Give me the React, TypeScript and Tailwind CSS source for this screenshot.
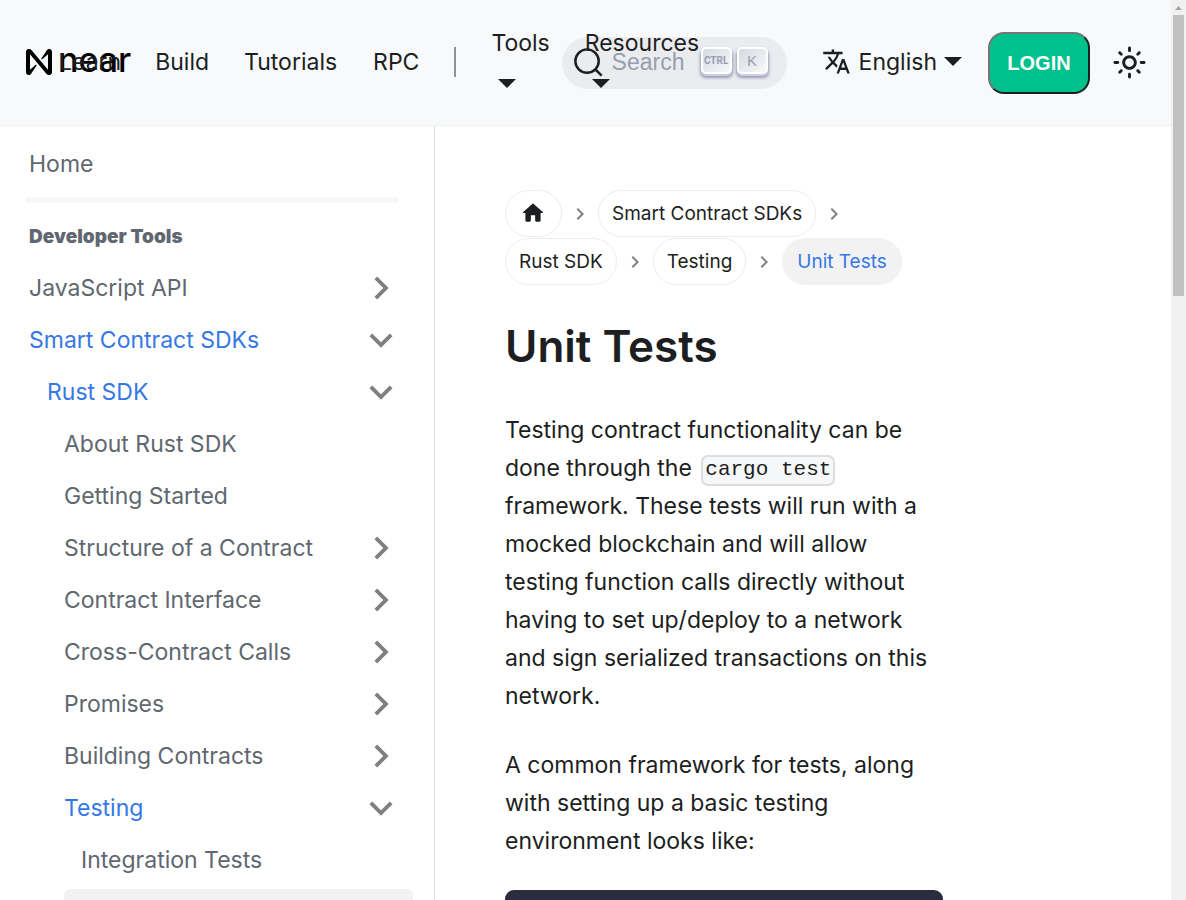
import React from "react";

type SidebarEntry = {
  label: string;
  depth: 0 | 1 | 2 | 3;
  state?: "open" | "closed";
};

const entries: SidebarEntry[] = [
  { label: "JavaScript API", depth: 0, state: "closed" },
  { label: "Smart Contract SDKs", depth: 0, state: "open" },
  { label: "Rust SDK", depth: 1, state: "open" },
  { label: "About Rust SDK", depth: 2 },
  { label: "Getting Started", depth: 2 },
  { label: "Structure of a Contract", depth: 2, state: "closed" },
  { label: "Contract Interface", depth: 2, state: "closed" },
  { label: "Cross-Contract Calls", depth: 2, state: "closed" },
  { label: "Promises", depth: 2, state: "closed" },
  { label: "Building Contracts", depth: 2, state: "closed" },
  { label: "Testing", depth: 2, state: "open" },
  { label: "Integration Tests", depth: 3 },
];

const indent = ["ml-0", "ml-[18px]", "ml-[35px]", "ml-[52px]"];

function Chevron({ className }: { className: string }) {
  return (
    <svg viewBox="0 0 24 24" className={className} fill="currentColor" aria-hidden="true">
      <path d="M7.41 15.41L12 10.83l4.59 4.58L18 14l-6-6-6 6z" />
    </svg>
  );
}

function Caret() {
  return (
    <svg viewBox="0 0 18 9" className="h-[9px] w-[18px] shrink-0" fill="currentColor" aria-hidden="true">
      <path d="M0 0h18L9 9z" />
    </svg>
  );
}

function NearLogo() {
  return (
    <a href="#home" aria-label="near" className="flex w-[16px] shrink-0 items-center gap-[6px] text-black">
      <svg viewBox="0 0 90 90" className="size-[26px] shrink-0" fill="currentColor" aria-hidden="true">
        <path d="M72.2 4.6L53.4 32.5c-1.3 1.9 1.2 4.2 3 2.6L74.9 19c.5-.4 1.2-.1 1.2.6v50.3c0 .7-.9 1-1.3.5l-56-67C17 1.200 14.400 0 11.600 0h-2C4.300 0 0 4.300 0 9.600v70.800C0 85.700 4.300 90 9.600 90c3.300 0 6.400-1.700 8.200-4.600l18.800-27.900c1.300-1.900-1.200-4.200-3-2.600L15.100 71c-.5.4-1.200.1-1.200-.6V20.100c0-.7.9-1 1.300-.5l56 67c1.800 2.200 4.500 3.400 7.200 3.400h2c5.300 0 9.600-4.300 9.600-9.600V9.600C90 4.300 85.700 0 80.400 0c-3.300 0-6.400 1.700-8.200 4.600z" />
      </svg>
      <span className="-mt-[4px] text-[34px] leading-[36px] font-medium">near</span>
    </a>
  );
}

function Header() {
  return (
    <header className="relative z-10 flex h-[126px] shrink-0 items-center border-b border-[#eff1f3] bg-[#f7f9fb] px-[26px]">
      <nav aria-label="Main" className="relative z-10 flex w-0 min-w-0 flex-1 items-center pb-[2px] whitespace-nowrap">
        <NearLogo />
        <a href="#learn" className="px-[17px]">Learn</a>
        <a href="#build" className="px-[17px]">Build</a>
        <a href="#tutorials" className="px-[18px]">Tutorials</a>
        <a href="#rpc" className="px-[18px]">RPC</a>
        <span className="mx-[17px] h-[30px] w-[2px] shrink-0 bg-[#909294]" />
        <button type="button" className="flex flex-col gap-[17px] px-[18px] pb-[12px] text-left">
          <span>Tools</span>
          <span className="pl-[7px]"><Caret /></span>
        </button>
        <button type="button" className="flex flex-col gap-[17px] px-[17px] pb-[12px] text-left">
          <span>Resources</span>
          <span className="pl-[7px]"><Caret /></span>
        </button>
      </nav>
      <div className="flex shrink-0 items-center">
        <button
          type="button"
          aria-label="Search"
          className="flex h-[52px] w-[225px] items-center rounded-full bg-[#ebecef] pl-[11px] font-['Liberation_Sans',sans-serif] text-[#969faf]"
        >
          <svg viewBox="0 0 20 20" className="size-[31px] shrink-0 text-[#1c1e21]" fill="none" stroke="currentColor" strokeWidth="1.6" strokeLinecap="round" aria-hidden="true">
            <path d="M14.386 14.386l4.0877 4.0877-4.0877-4.0877c-2.9418 2.9419-7.7115 2.9419-10.6533 0-2.9419-2.9418-2.9419-7.7115 0-10.6533 2.9418-2.9419 7.7115-2.9419 10.6533 0 2.9419 2.9418 2.9419 7.7115 0 10.6533z" />
          </svg>
          <span className="ml-[8px] pb-[2px] text-[23px]">Search</span>
          <span className="mb-[4px] ml-auto flex gap-[5px] pr-[19px]">
            <kbd className="flex h-[27px] w-[31px] items-center justify-center rounded-[5px] border-2 border-white bg-linear-to-br from-[#d5dbe4] to-[#f8f8f8] font-['Roboto',sans-serif] text-[10px] font-bold shadow-[0_2px_0_0_#cdcde6,0_3px_3px_1px_rgba(30,35,90,0.4)]">
              CTRL
            </kbd>
            <kbd className="flex h-[27px] w-[31px] items-center justify-center rounded-[5px] border-2 border-white bg-linear-to-br from-[#d5dbe4] to-[#f8f8f8] font-['Liberation_Sans',sans-serif] text-[15px] shadow-[0_2px_0_0_#cdcde6,0_3px_3px_1px_rgba(30,35,90,0.4)]">
              K
            </kbd>
          </span>
        </button>
        <button type="button" className="ml-[35px] flex items-center pb-[2px]">
          <svg viewBox="0 0 24 24" className="size-[29px]" fill="currentColor" aria-hidden="true">
            <path d="M12.87 15.07l-2.54-2.51.03-.03c1.740-1.940 2.980-4.170 3.710-6.530H17V4h-7V2H8v2H1v1.990h11.170C11.500 7.920 10.440 9.750 9 11.350 8.070 10.320 7.300 9.190 6.690 8h-2c.73 1.630 1.730 3.170 2.980 4.560l-5.090 5.020L4 19l5-5 3.110 3.110.760-2.040zM18.500 10h-2L12 22h2l1.120-3h4.750L21 22h2l-4.500-12zm-2.620 7l1.620-4.330L19.120 17h-3.240z" />
          </svg>
          <span className="mr-[7px] ml-[8px]">English</span>
          <Caret />
        </button>
        <button
          type="button"
          className="ml-[26px] h-[62px] w-[102px] rounded-[16px] border-2 border-t-[#767676] border-r-[#1c1e21] border-b-[#1c1e21] border-l-[#767676] bg-[#00c08b] font-['Liberation_Sans',sans-serif] text-[20px] font-bold text-white"
        >
          LOGIN
        </button>
        <button type="button" aria-label="Switch colour mode" className="-mr-[2px] ml-[22px]">
          <svg viewBox="0 0 24 24" className="size-[35px]" fill="currentColor" aria-hidden="true">
            <path d="M12,9c1.65,0,3,1.35,3,3s-1.35,3-3,3s-3-1.35-3-3S10.35,9,12,9 M12,7c-2.76,0-5,2.24-5,5s2.24,5,5,5s5-2.24,5-5 S14.76,7,12,7L12,7z M2,13l2,0c0.55,0,1-0.45,1-1s-0.45-1-1-1l-2,0c-0.55,0-1,0.45-1,1S1.45,13,2,13z M20,13l2,0c0.55,0,1-0.45,1-1 s-0.45-1-1-1l-2,0c-0.55,0-1,0.45-1,1S19.45,13,20,13z M11,2v2c0,0.55,0.45,1,1,1s1-0.45,1-1V2c0-0.55-0.45-1-1-1S11,1.45,11,2z M11,20v2c0,0.55,0.45,1,1,1s1-0.45,1-1v-2c0-0.55-0.45-1-1-1C11.45,19,11,19.45,11,20z M5.99,4.58c-0.39-0.39-1.03-0.39-1.41,0 c-0.39,0.39-0.39,1.03,0,1.41l1.06,1.06c0.39,0.39,1.03,0.39,1.41,0s0.39-1.03,0-1.41L5.99,4.58z M18.36,16.95 c-0.39-0.39-1.03-0.39-1.41,0c-0.39,0.39-0.39,1.03,0,1.41l1.06,1.06c0.39,0.39,1.03,0.39,1.41,0c0.39-0.39,0.39-1.03,0-1.41 L18.36,16.95z M19.42,5.99c0.39-0.39,0.39-1.03,0-1.41c-0.39-0.39-1.03-0.39-1.41,0l-1.06,1.06c-0.39,0.39-0.39,1.03,0,1.41 s1.03,0.39,1.41,0L19.42,5.99z M7.05,18.36c0.39-0.39,0.39-1.03,0-1.41c-0.39-0.39-1.03-0.39-1.41,0l-1.06,1.06 c-0.39,0.39-0.39,1.03,0,1.41s1.03,0.39,1.41,0L7.05,18.36z" />
          </svg>
        </button>
      </div>
    </header>
  );
}

function Sidebar() {
  return (
    <aside className="w-[435px] shrink-0 overflow-hidden border-r border-[#dadde1] pt-[14px] pr-[21px] pl-[29px] text-[#606770]">
      <nav aria-label="Docs">
        <a href="#home" className="flex h-[47px] items-center">Home</a>
        <hr className="mt-[10px] mr-[15px] -ml-[3px] h-[6px] border-0 bg-[#f8f8f8]" />
        <h2 className="mt-[19px] text-[19px] leading-[30px] font-black">Developer Tools</h2>
        <ul className="mt-[12px] flex flex-col gap-[5px]">
          {entries.map((entry) => (
            <li key={entry.label}>
              <a
                href={"#" + entry.label}
                className={
                  "flex h-[47px] items-center justify-between pr-[9px] " +
                  indent[entry.depth] +
                  (entry.state === "open" ? " text-[#3578e5]" : "")
                }
              >
                {entry.label}
                {entry.state && (
                  <Chevron
                    className={
                      entry.state === "open"
                        ? "size-[46px] rotate-180 text-[#808080]"
                        : "size-[46px] rotate-90 text-[#808080]"
                    }
                  />
                )}
              </a>
            </li>
          ))}
          <li className="pt-px">
            <a href="#unit-tests" aria-current="page" className="ml-[35px] flex h-[47px] items-center rounded-[6px] bg-[#f2f2f2] pl-[17px] text-[#3578e5]">
              Unit Tests
            </a>
          </li>
        </ul>
      </nav>
    </aside>
  );
}

const crumbs = ["Smart Contract SDKs", "Rust SDK", "Testing"];

function Breadcrumbs() {
  return (
    <nav aria-label="Breadcrumbs">
      <ol className="flex flex-wrap gap-y-px text-[19px]">
        <li className="flex items-center">
          <a href="#home" aria-label="Home page" className="flex h-[47px] w-[57px] items-center justify-center rounded-full border border-[#ededed]">
            <svg viewBox="0 0 24 24" className="mr-[2px] mb-[2px] size-[26px]" fill="currentColor" aria-hidden="true">
              <path d="M10 19v-5h4v5c0 .55.45 1 1 1h3c.55 0 1-.45 1-1v-7h1.700c.46 0 .68-.57.33-.87L12.670 3.600c-.38-.34-.96-.34-1.340 0l-8.360 7.530c-.34.3-.13.87.33.87H5v7c0 .55.45 1 1 1h3c.55 0 1-.45 1-1z" />
            </svg>
          </a>
          <Chevron className="mx-[6px] size-[24px] rotate-90 text-[#808080]" />
        </li>
        {crumbs.map((crumb) => (
          <li key={crumb} className="flex items-center">
            <a href={"#" + crumb} className="flex h-[47px] items-center rounded-full border border-[#ededed] px-[13px]">
              {crumb}
            </a>
            <Chevron className="mx-[6px] size-[24px] rotate-90 text-[#808080]" />
          </li>
        ))}
        <li className="flex h-[47px] items-center rounded-full bg-[#f2f2f2] px-[15px] text-[#3578e5]" aria-current="page">
          Unit Tests
        </li>
      </ol>
    </nav>
  );
}

function ScrollTrack() {
  return (
    <div aria-hidden="true" className="flex w-[15px] shrink-0 flex-col items-center bg-[#f1f1f1]">
      <svg viewBox="0 0 15 15" className="size-[15px]" fill="#a3a3a3">
        <path d="M4 10L7.500 6 11 10z" />
      </svg>
      <div className="h-[281px] w-[11px] bg-[#c1c1c1]" />
    </div>
  );
}

export default function App() {
  return (
    <div className="flex h-screen overflow-hidden bg-white font-['Inter',sans-serif] text-[23px] leading-[38px] text-[#1c1e21]">
      <div className="flex min-w-0 flex-1 flex-col">
        <Header />
        <div className="flex min-h-0 flex-1">
          <Sidebar />
          <main className="min-w-0 flex-1 overflow-hidden pt-[64px] pr-[228px] pl-[70px]">
            <Breadcrumbs />
            <h1 className="mt-[32px] text-[44px] leading-[58px] font-semibold">Unit Tests</h1>
            <p className="mt-[36px]">
              Testing contract functionality can be done through the{" "}
              <code className="ml-[3px] rounded-[7px] border-2 border-[#dcdee0] bg-[#f6f7f8] px-[2px] pt-[1px] pb-[3px] align-middle font-['Liberation_Mono',monospace] text-[21px] leading-none">
                cargo test
              </code>{" "}
              framework. These tests will run with a mocked blockchain and will allow testing function calls directly
              without having to set up/deploy to a network and sign serialized transactions on this network.
            </p>
            <p className="mt-[31px]">
              A common framework for tests, along with setting up a basic testing environment looks like:
            </p>
            <pre className="mt-[30px] h-[200px] rounded-[9px] bg-[#292d3e]" />
          </main>
        </div>
      </div>
      <ScrollTrack />
    </div>
  );
}
